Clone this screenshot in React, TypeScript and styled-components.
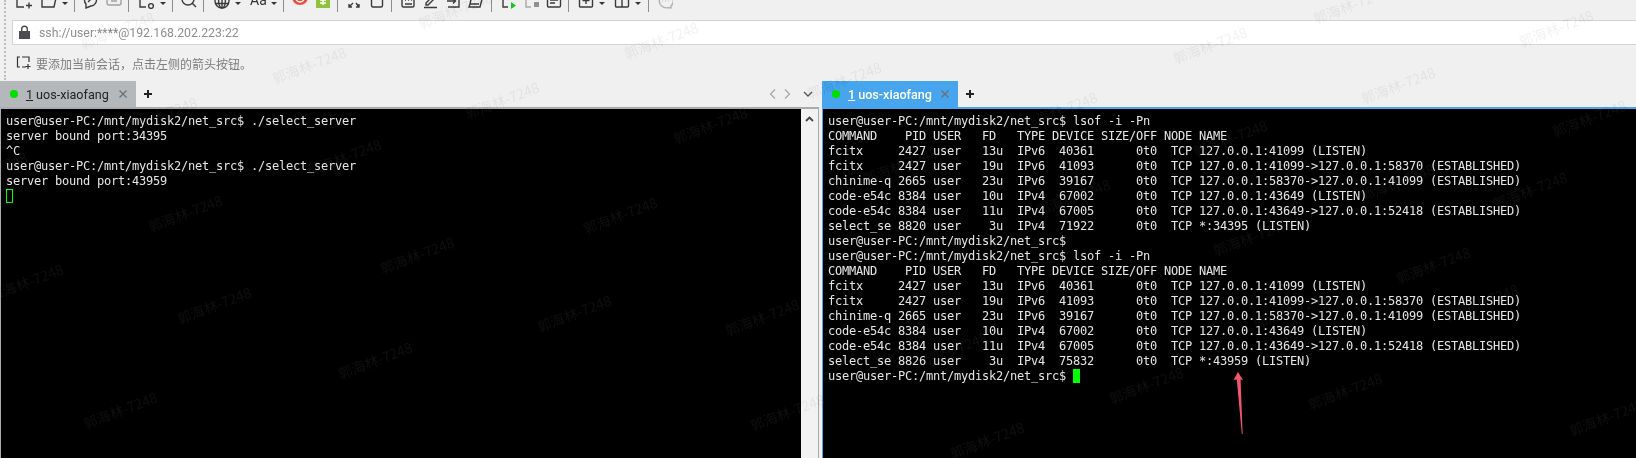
import React from "react";
import styled, { createGlobalStyle } from "styled-components";

const Global = createGlobalStyle`
  html, body { margin: 0; padding: 0; background: #f0f0f0; overflow: hidden; }
  #root { width: 1636px; height: 458px; }
`;

const Page = styled.div`
  position: relative;
  width: 1636px;
  height: 458px;
  overflow: hidden;
  background: #f0f0f0;
  display: flex;
  flex-direction: column;
  font-family: "Noto Sans", "Noto Sans CJK SC", sans-serif;
`;

const Header = styled.header`
  display: flex;
  height: 81px;
`;
const Grip = styled.div`
  width: 8px;
  margin-left: 4px;
  border-left: 2px dotted #bdbdbd;
  box-sizing: border-box;
  height: 80px;
`;
const HeaderMain = styled.div`
  flex: 1;
  display: flex;
  flex-direction: column;
  min-width: 0;
`;
const Toolbar = styled.div`
  height: 20px;
  display: flex;
  align-items: flex-end;
  overflow: hidden;
`;
const Tool = styled.svg<{ $ml: number; $stroke?: string }>`
  flex: none;
  width: 16px;
  height: 16px;
  margin-left: ${(p) => p.$ml}px;
  margin-bottom: 11px;
  fill: none;
  stroke: ${(p) => p.$stroke ?? "#3a3a3a"};
  stroke-width: 1.4;
`;
const Caret = styled.span<{ $ml: number }>`
  flex: none;
  width: 0;
  height: 0;
  margin-left: ${(p) => p.$ml + 0.5}px;
  margin-right: 0.5px;
  margin-bottom: 15px;
  border-left: 3px solid transparent;
  border-right: 3px solid transparent;
  border-top: 3px solid #333;
`;
const Sep = styled.span<{ $ml: number }>`
  flex: none;
  width: 1px;
  height: 20px;
  margin-left: ${(p) => p.$ml}px;
  margin-bottom: 8px;
  background: #8f8f8f;
`;
const FontTool = styled.span<{ $ml: number }>`
  flex: none;
  width: 16px;
  margin-left: ${(p) => p.$ml}px;
  margin-bottom: 13px;
  font: 14px/14px Roboto, sans-serif;
  color: #333;
`;
const Address = styled.div`
  height: 25px;
  box-sizing: border-box;
  background: #fff;
  border: 1px solid #d3d3d3;
  border-right: 0;
  display: flex;
  align-items: center;
  padding-left: 6px;
  gap: 9px;
`;
const Lock = styled.svg`
  width: 11px;
  height: 14px;
  flex: none;
  margin-top: -1px;
  fill: #4b4b50;
`;
const AddressText = styled.span`
  font: 12.3px Roboto, sans-serif;
  color: #8e8e8e;
`;
const Hint = styled.div`
  flex: 1;
  display: flex;
  align-items: center;
  padding: 0 0 0 4px;
  gap: 4px;
`;
const HintIcon = styled.svg`
  width: 16px;
  height: 14px;
  flex: none;
  fill: none;
  stroke: #333;
  stroke-width: 1.2;
`;
const HintText = styled.span`
  font: 12px "Noto Sans CJK SC", sans-serif;
  color: #7c7c7c;
`;

const Panes = styled.main`
  flex: 1;
  display: flex;
  min-height: 0;
`;
const Pane = styled.section<{ $w?: number }>`
  display: flex;
  flex-direction: column;
  ${(p) => (p.$w ? `width: ${p.$w}px; flex: none;` : "flex: 1;")}
`;
const TabRow = styled.div`
  height: 26px;
  display: flex;
  align-items: center;
`;
const Tab = styled.div<{ $active?: boolean }>`
  width: 136px;
  height: 26px;
  box-sizing: border-box;
  display: flex;
  align-items: center;
  padding-left: 10px;
  background: ${(p) => (p.$active ? "#47a5ee" : "#b4b8bb")};
  color: ${(p) => (p.$active ? "#fff" : "#222")};
  font: ${(p) => (p.$active ? 500 : 400)} 12.6px Roboto, sans-serif;
`;
const Dot = styled.span`
  width: 8px;
  height: 8px;
  border-radius: 50%;
  background: #00e000;
  flex: none;
  margin-right: 8px;
`;
const TabNum = styled.span`
  text-decoration: underline;
  margin-right: 3px;
`;
const TabClose = styled.svg`
  width: 8px;
  height: 8px;
  margin-left: auto;
  margin-right: 9px;
  fill: none;
  stroke: #6a6e72;
  stroke-width: 1.2;
`;
const AddTab = styled.span`
  margin-left: 8px;
  width: 8px;
  height: 8px;
  flex: none;
  background:
    linear-gradient(#222, #222) center / 8px 2px no-repeat,
    linear-gradient(#222, #222) center / 2px 8px no-repeat;
`;
const TabControls = styled.div`
  margin-left: auto;
  margin-right: 9px;
  display: flex;
  align-items: center;
`;
const Chevron = styled.svg<{ $ml: number }>`
  width: 8px;
  height: 10px;
  margin-left: ${(p) => p.$ml}px;
  fill: none;
  stroke: #a6a6a6;
  stroke-width: 1.2;
`;
const ChevronDown = styled.svg`
  width: 10px;
  height: 6px;
  margin-left: 12px;
  fill: none;
  stroke: #555;
  stroke-width: 1.3;
`;
const PaneBody = styled.div<{ $active?: boolean }>`
  flex: 1;
  display: flex;
  min-height: 0;
  border-top: 2px solid ${(p) => (p.$active ? "#47a5ee" : "#a8acaf")};
  ${(p) => (p.$active ? "border-left: 1px solid #47a5ee;" : "margin-right: 3px; border-left: 1px solid #a8acaf; border-right: 1px solid #a8acaf;")}
`;
const Terminal = styled.pre<{ $pad: number }>`
  flex: 1;
  margin: 0;
  min-width: 0;
  background: #000;
  color: #e6e6e6;
  padding: 5px 0 0 ${(p) => p.$pad}px;
  font: 12px/15px "DejaVu Sans Mono", monospace;
  letter-spacing: -0.224px;
  overflow: hidden;
`;
const Line = styled.div`
  height: 15px;
  white-space: pre;
`;
const Cursor = styled.span<{ $filled?: boolean }>`
  display: inline-block;
  box-sizing: border-box;
  width: 7px;
  height: 14px;
  vertical-align: -3px;
  ${(p) => (p.$filled ? "background: #00ff00;" : "border: 1px solid #00ff00;")}
`;
const Scrollbar = styled.div`
  width: 17px;
  flex: none;
  background: #f2f2f2;
  display: flex;
  justify-content: center;
  padding-top: 7px;
  box-sizing: border-box;
`;
const ScrollUp = styled.svg`
  width: 9px;
  height: 6px;
  fill: none;
  stroke: #444;
  stroke-width: 1.8;
`;

const Watermarks = styled.div`
  position: absolute;
  inset: 0;
  pointer-events: none;
  mix-blend-mode: difference;
`;
const Mark = styled.span`
  position: absolute;
  width: 90px;
  margin-left: -45px;
  margin-top: -10px;
  text-align: center;
  white-space: nowrap;
  font: 14px/20px "Noto Sans CJK SC", sans-serif;
  color: #0f0f0f;
  transform: rotate(-21deg);
`;
const Arrow = styled.svg`
  position: absolute;
  left: 1232px;
  top: 372px;
  width: 14px;
  height: 63px;
`;

const left = [
  "user@user-PC:/mnt/mydisk2/net_src$ ./select_server",
  "server bound port:34395",
  "^C",
  "user@user-PC:/mnt/mydisk2/net_src$ ./select_server",
  "server bound port:43959",
];
const head = "COMMAND    PID USER   FD   TYPE DEVICE SIZE/OFF NODE NAME";
const prompt = "user@user-PC:/mnt/mydisk2/net_src$";
const body = [
  "fcitx     2427 user   13u  IPv6  40361      0t0  TCP 127.0.0.1:41099 (LISTEN)",
  "fcitx     2427 user   19u  IPv6  41093      0t0  TCP 127.0.0.1:41099->127.0.0.1:58370 (ESTABLISHED)",
  "chinime-q 2665 user   23u  IPv6  39167      0t0  TCP 127.0.0.1:58370->127.0.0.1:41099 (ESTABLISHED)",
  "code-e54c 8384 user   10u  IPv4  67002      0t0  TCP 127.0.0.1:43649 (LISTEN)",
  "code-e54c 8384 user   11u  IPv4  67005      0t0  TCP 127.0.0.1:43649->127.0.0.1:52418 (ESTABLISHED)",
];
const right = [
  `${prompt} lsof -i -Pn`,
  head,
  ...body,
  "select_se 8820 user    3u  IPv4  71922      0t0  TCP *:34395 (LISTEN)",
  prompt,
  `${prompt} lsof -i -Pn`,
  head,
  ...body,
  "select_se 8826 user    3u  IPv4  75832      0t0  TCP *:43959 (LISTEN)",
];

const marks: [number, number][] = [
  [117, 30], [309, 65], [160, 115], [185, 213], [344, 157], [-10, 170], [455, 10], [661, 40],
  [502, 100], [710, 125], [844, 80], [900, 165], [1060, 110], [950, 350], [1146, 385], [987, 440],
  [1350, 5], [1210, 45], [1556, 28], [1398, 85], [1589, 118], [1230, 138], [1073, 197], [1250, 237],
  [1433, 265], [1397, 182], [762, 317], [787, 412], [26, 282], [214, 305], [120, 410], [417, 255],
  [574, 313], [375, 360], [1345, 391], [1481, 302], [1606, 417], [620, 215], [1530, 190], [1290, 310],
];

const App = () => (
  <Page>
    <Global />
    <Header>
      <Grip />
      <HeaderMain>
        <Toolbar>
          <Tool $ml={4} viewBox="0 0 16 16"><path d="M1 0v14h7M13 0v7M10 12.5h6M13 9.5v6" /></Tool>
          <Tool $ml={9} viewBox="0 0 16 16"><path d="M1 2v12h12l2-9V2H1" /></Tool>
          <Caret $ml={4} />
          <Sep $ml={6} />
          <Tool $ml={8} viewBox="0 0 16 16"><path d="M3 11a6 6 0 1 1 5 2l-5 2zM5 9l6-6M7 6h5" /></Tool>
          <Tool $ml={7} $stroke="#a0a0a0" viewBox="0 0 16 16"><path d="M3 2h10a2 2 0 0 1 2 2v6a2 2 0 0 1-2 2H3a2 2 0 0 1-2-2V4a2 2 0 0 1 2-2zM5 8h6" /></Tool>
          <Sep $ml={6} />
          <Tool $ml={10} viewBox="0 0 16 16"><path d="M1 0v14h6M13 0v7" /><circle cx="12" cy="13" r="2.4" /></Tool>
          <Caret $ml={4} />
          <Sep $ml={6} />
          <Tool $ml={8} viewBox="0 0 16 16"><circle cx="7" cy="6" r="6" /><path d="M11 10l4 4" /></Tool>
          <Sep $ml={6} />
          <Tool $ml={10} viewBox="0 0 16 16"><circle cx="8" cy="8" r="7" /><ellipse cx="8" cy="8" rx="3.4" ry="7" /><path d="M1 5h14M1 10.5h14M8 1v14" /></Tool>
          <Caret $ml={4} />
          <FontTool $ml={9}>Aa</FontTool>
          <Caret $ml={4} />
          <Sep $ml={6} />
          <Tool $ml={8} $stroke="none" viewBox="0 0 16 16">
            <path fill="#e8503f" d="M0 4h16a8 8 0 0 1-16 0z" />
            <path fill="none" stroke="#fff" strokeWidth="1.4" d="M4 5a4 4 0 0 0 8 0" />
          </Tool>
          <Tool $ml={7} $stroke="none" viewBox="0 0 16 16">
            <rect x="1" y="0" width="14" height="15" fill="#8fc33c" />
            <path fill="none" stroke="#fff" strokeWidth="1.4" d="M5 7h6M5 10h6M8 5v7" />
          </Tool>
          <Sep $ml={6} />
          <Tool $ml={8} viewBox="0 0 16 16"><path d="M7 10l-4 4M3 11v3h3M10 10l3 4M13 11v3h-3" /></Tool>
          <Tool $ml={7} viewBox="0 0 16 16"><rect x="2.5" y="3" width="11" height="11" rx="1.5" /></Tool>
          <Sep $ml={6} />
          <Tool $ml={8} viewBox="0 0 16 16"><rect x="2" y="1" width="12" height="13" rx="1.5" /><path d="M5 7h1M8 7h1M11 7h1M5 11h7" /></Tool>
          <Tool $ml={7} viewBox="0 0 16 16"><path d="M3 10l8-8 2 2-8 8H3zM1 14.5h13" /></Tool>
          <Tool $ml={7} viewBox="0 0 16 16"><path d="M2 3h11v11H2M1 8h8M7 5.5 9.5 8 7 10.5" /></Tool>
          <Tool $ml={6} viewBox="0 0 16 16"><path d="M4 2h11l-3 12H1l1-3h9M4 2l-2 9" /></Tool>
          <Sep $ml={7} />
          <Tool $ml={9} viewBox="0 0 16 16"><path d="M2 1v13h5M12 1v5" /><path d="M10 9v7l5-3.5z" fill="#18c818" stroke="none" /></Tool>
          <Tool $ml={7} $stroke="#a9a9a9" viewBox="0 0 16 16"><path d="M2 1v13h5M12 1v3" /><rect x="10" y="9" width="5" height="5" fill="#8f8f96" stroke="none" /></Tool>
          <Tool $ml={6} viewBox="0 0 16 16"><rect x="1.5" y="0" width="13" height="14" rx="1.2" /><path d="M4 4h8M4 7h8M4 10h5" /></Tool>
          <Sep $ml={6} />
          <Tool $ml={9} viewBox="0 0 16 16"><rect x="1.5" y="1" width="13" height="13" rx="1" /><path d="M8 4v7M4.5 7.5h7" /></Tool>
          <Caret $ml={4} />
          <Tool $ml={9} viewBox="0 0 16 16"><rect x="1.5" y="1" width="13" height="13" rx="1" /><path d="M1.5 6h13M8 6v8" /></Tool>
          <Caret $ml={4} />
          <Sep $ml={7} />
          <Tool $ml={8} $stroke="#b0b0b0" viewBox="0 0 16 16"><path d="M14 13a7 7 0 1 0-3 1.6l3 .4zM5 8h.5M8 8h.5M11 8h.5" /></Tool>
        </Toolbar>
        <Address>
          <Lock viewBox="0 0 11 14">
            <path d="M0 6h11v8H0zM2 6V4a3.5 3.5 0 0 1 7 0v2H7.6V4a2.1 2.1 0 0 0-4.2 0v2z" />
          </Lock>
          <AddressText>ssh://user:****@192.168.202.223:22</AddressText>
        </Address>
        <Hint>
          <HintIcon viewBox="0 0 16 14">
            <path d="M4 1H1.5v10H4M6 1h7v5M6 11h4M12 8v5M9.5 10.5h5" />
          </HintIcon>
          <HintText>要添加当前会话，点击左侧的箭头按钮。</HintText>
        </Hint>
      </HeaderMain>
    </Header>
    <Panes>
      <Pane $w={822}>
        <TabRow>
          <Tab>
            <Dot />
            <TabNum>1</TabNum>uos-xiaofang
            <TabClose viewBox="0 0 8 8"><path d="M.5.5l7 7M7.5.5l-7 7" /></TabClose>
          </Tab>
          <AddTab />
          <TabControls>
            <Chevron $ml={0} viewBox="0 0 8 10"><path d="M6 .5 1.5 5 6 9.5" /></Chevron>
            <Chevron $ml={6} viewBox="0 0 8 10"><path d="M2 .5 6.5 5 2 9.5" /></Chevron>
            <ChevronDown viewBox="0 0 10 6"><path d="M1 1l4 4 4-4" /></ChevronDown>
          </TabControls>
        </TabRow>
        <PaneBody>
          <Terminal $pad={5}>
            {left.map((l, i) => <Line key={i}>{l}</Line>)}
            <Line><Cursor /></Line>
          </Terminal>
          <Scrollbar>
            <ScrollUp viewBox="0 0 9 6"><path d="M1 5l3.5-3.5L8 5" /></ScrollUp>
          </Scrollbar>
        </PaneBody>
      </Pane>
      <Pane>
        <TabRow>
          <Tab $active>
            <Dot />
            <TabNum>1</TabNum>uos-xiaofang
            <TabClose viewBox="0 0 8 8"><path d="M.5.5l7 7M7.5.5l-7 7" /></TabClose>
          </Tab>
          <AddTab />
        </TabRow>
        <PaneBody $active>
          <Terminal $pad={5}>
            {right.map((l, i) => <Line key={i}>{l}</Line>)}
            <Line>{prompt} <Cursor $filled /></Line>
          </Terminal>
        </PaneBody>
      </Pane>
    </Panes>
    <Watermarks>
      {marks.map(([x, y], i) => (
        <Mark key={i} style={{ left: x, top: y }}>郭海林-7248</Mark>
      ))}
    </Watermarks>
    <Arrow viewBox="0 0 14 63">
      <path fill="#f2566c" d="M6 0l5 8-2.4-.6L10.6 62 9.8 62 4.8 7.6 1.5 8z" />
    </Arrow>
  </Page>
);

export default App;
